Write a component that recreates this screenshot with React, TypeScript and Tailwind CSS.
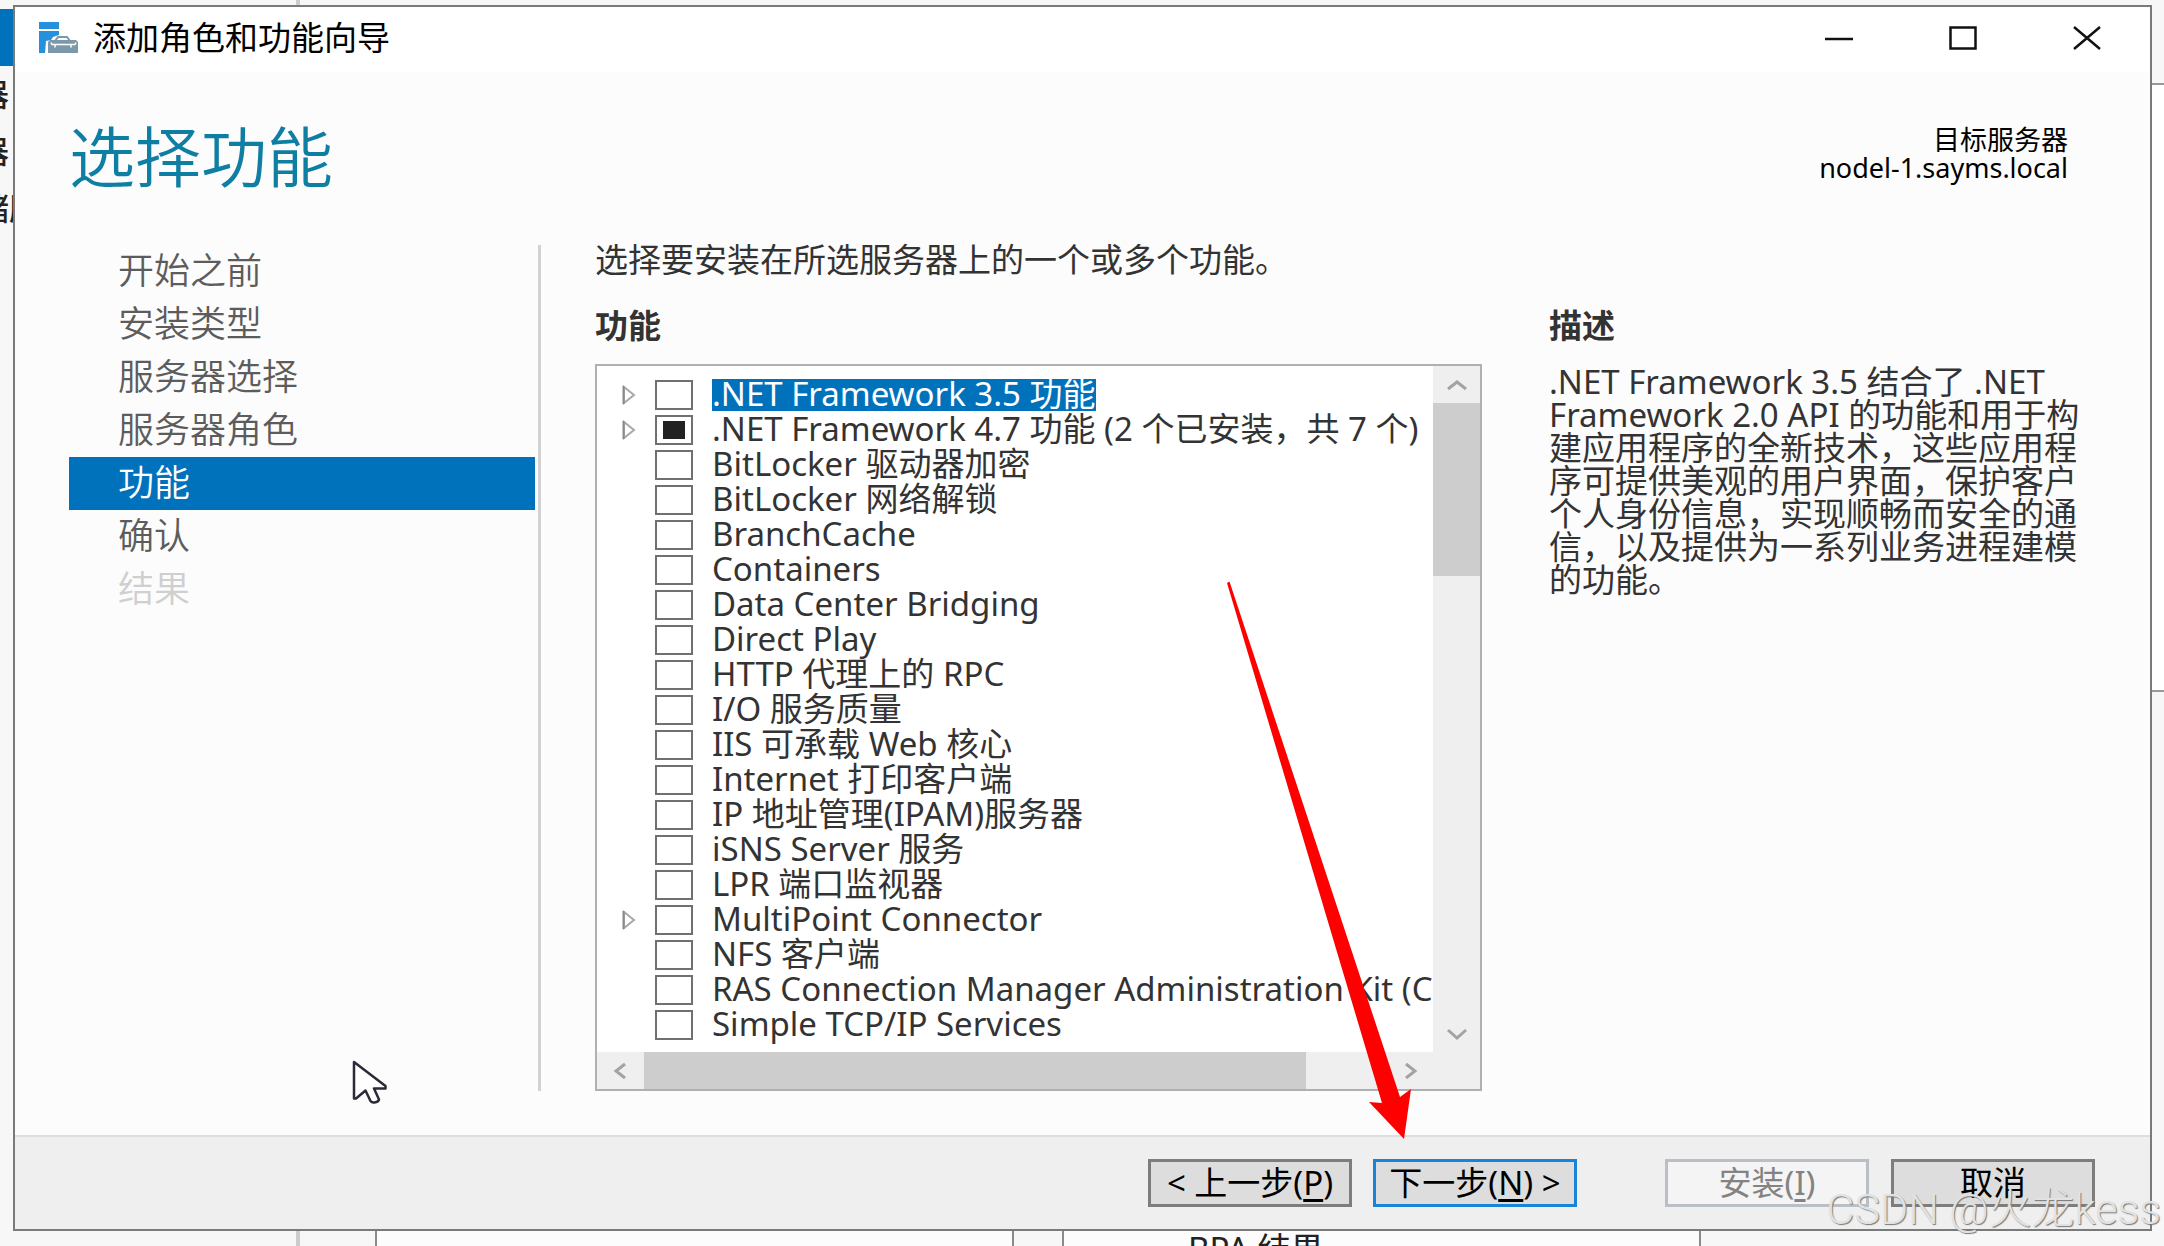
import type { ReactNode } from 'react';

type Feature = { label: string; expandable?: boolean; selected?: boolean; partial?: boolean };

const features: Feature[] = [
  { label: '.NET Framework 3.5 功能', expandable: true, selected: true },
  { label: '.NET Framework 4.7 功能 (2 个已安装，共 7 个)', expandable: true, partial: true },
  { label: 'BitLocker 驱动器加密' },
  { label: 'BitLocker 网络解锁' },
  { label: 'BranchCache' },
  { label: 'Containers' },
  { label: 'Data Center Bridging' },
  { label: 'Direct Play' },
  { label: 'HTTP 代理上的 RPC' },
  { label: 'I/O 服务质量' },
  { label: 'IIS 可承载 Web 核心' },
  { label: 'Internet 打印客户端' },
  { label: 'IP 地址管理(IPAM)服务器' },
  { label: 'iSNS Server 服务' },
  { label: 'LPR 端口监视器' },
  { label: 'MultiPoint Connector', expandable: true },
  { label: 'NFS 客户端' },
  { label: 'RAS Connection Manager Administration Kit (CMAK)' },
  { label: 'Simple TCP/IP Services' },
];

const steps = ['开始之前', '安装类型', '服务器选择', '服务器角色', '功能', '确认', '结果'];

function stepClass(step: string) {
  if (step === '功能') return 'bg-[#0072bc] text-white';
  if (step === '结果') return 'text-[#cfcfcf]';
  return 'text-[#5c5c5c]';
}

function WizardIcon() {
  return (
    <svg width="40" height="32" viewBox="0 0 40 32" aria-hidden="true">
      <path fill="#2590dc" d="M0 0h20v7H0zM0 9h20v4l-6 2-2 3-5 1-1 12H0z" />
      <path fill="none" stroke="#7c98ab" strokeWidth="2" d="M16 19l3-4h9l3 4" />
      <path fill="#7c98ab" d="M9 20l2-2h26l2 2v11H9z" />
      <path fill="none" stroke="#fff" strokeWidth="1.500" d="M12 20.500l1 2h23l1-2M16 22v3.500M32 22v3.500" />
    </svg>
  );
}

function Chevron({ d, label }: { d: string; label: string }) {
  return (
    <button aria-label={label} className="flex h-[37px] w-[47px] shrink-0 items-center justify-center">
      <svg width="22" height="18" viewBox="0 0 22 18" fill="none" stroke="#a3a3a3" strokeWidth="3">
        <path d={d} />
      </svg>
    </button>
  );
}

function FeatureRow({ feature, id }: { feature: Feature; id: string }) {
  return (
    <li className="flex h-[35px] items-center whitespace-nowrap pl-[25px]">
      <span className="w-[33px] shrink-0">
        {feature.expandable && (
          <svg width="14" height="20" viewBox="0 0 14 20" fill="none" aria-hidden="true">
            <path d="M2 2l10 8-10 8z" stroke="#a8a8a8" strokeWidth="2" />
            <path d="M1.500 1v18" stroke="#8a8a8a" strokeWidth="2" />
          </svg>
        )}
      </span>
      <input
        id={id}
        type="checkbox"
        defaultChecked={feature.partial}
        className="h-[30px] w-[38px] shrink-0 appearance-none border-2 border-[#707070] bg-clip-content px-[6px] py-[4px] checked:bg-[#222]"
      />
      <label
        htmlFor={id}
        className={
          feature.selected
            ? 'ml-[19px] h-[32px] bg-[#0072bc] leading-[30px] text-white'
            : 'ml-[19px] h-[32px] leading-[30px]'
        }
      >
        {feature.label}
      </label>
    </li>
  );
}

function FooterButton({ children, look }: { children: ReactNode; look: 'plain' | 'primary' | 'disabled' }) {
  const looks = {
    plain: 'border-[#7d7d7d] bg-[#dddddd] text-black',
    primary: 'border-[#1883d7] bg-[#dddddd] text-black',
    disabled: 'border-[#b9bfc4] bg-[#f4f4f4] text-[#838383]',
  };
  return (
    <button
      disabled={look === 'disabled'}
      className={`h-[48px] w-[204px] whitespace-nowrap border-[3px] text-[33px] leading-[40px] ${looks[look]}`}
    >
      {children}
    </button>
  );
}

function ServerManager() {
  return (
    <div className="flex h-full bg-[#f7f7f7] text-[#222]">
      <nav className="w-[300px] shrink-0 border-r-4 border-[#cccccc] pt-[9px]">
        <ul className="-ml-[146px] whitespace-nowrap text-[31px] font-medium">
          <li className="h-[57px] bg-[#0072bc] leading-[57px] text-white">仪表板</li>
          <li className="h-[57px] leading-[57px]">本地服务器</li>
          <li className="h-[57px] leading-[57px]">所有服务器</li>
          <li className="h-[57px] leading-[57px]">文件和存储服务</li>
        </ul>
      </nav>
      <div className="flex flex-1 flex-col pl-[75px]">
        <div className="mt-[83px] h-[609px] border-y-2 border-[#999] bg-white" />
        <div className="mt-[60px] flex flex-1 gap-[48px]">
          <div className="w-[639px] border-x-2 border-[#8a8a8a] bg-[#fcfcfc]" />
          <div className="flex w-[639px] items-end border-x-2 border-[#8a8a8a] bg-[#fcfcfc] pl-[124px]">
            <span className="-mb-[23px] text-[33px] leading-[40px]">BPA 结果</span>
          </div>
        </div>
      </div>
    </div>
  );
}

export default function App() {
  return (
    <div className="relative h-screen w-full overflow-hidden font-['Noto_Sans','Noto_Sans_CJK_SC',sans-serif]">
      <ServerManager />

      <section
        role="dialog"
        aria-label="添加角色和功能向导"
        className="absolute bottom-[15px] left-[13px] right-[12px] top-[5px] flex flex-col border-2 border-[#7a7a7a] bg-[#fcfcfc] text-[#333]"
      >
        <header className="flex h-[65px] shrink-0 items-center bg-white pb-[3px] pl-[24px] pr-[43px] text-black">
          <WizardIcon />
          <span className="ml-[14px] text-[33px] leading-[40px]">添加角色和功能向导</span>
          <div className="ml-auto flex gap-[84px]">
            <button aria-label="最小化" className="w-[40px]">
              <svg className="mx-auto" width="28" height="24" viewBox="0 0 28 24">
                <path d="M0 13h28" stroke="#111" strokeWidth="2.500" />
              </svg>
            </button>
            <button aria-label="最大化" className="w-[40px]">
              <svg className="mx-auto" width="28" height="24" viewBox="0 0 28 24" fill="none">
                <path d="M1.500 1.500h25v21h-25z" stroke="#111" strokeWidth="2.500" />
              </svg>
            </button>
            <button aria-label="关闭" className="w-[40px]">
              <svg className="mx-auto" width="28" height="24" viewBox="0 0 28 24" fill="none">
                <path d="M1 1l26 22M27 1L1 23" stroke="#111" strokeWidth="2.500" />
              </svg>
            </button>
          </div>
        </header>

        <div className="flex h-[173px] shrink-0 items-center justify-between pb-[6px] pl-[54px] pr-[82px]">
          <h1 className="text-[66px] font-[350] leading-[72px] text-[#0f7ea3]">选择功能</h1>
          <p className="pb-[4px] text-right text-[27px] leading-[28px] text-black">
            目标服务器
            <br />
            nodel-1.sayms.local
          </p>
        </div>

        <div className="flex min-h-0 flex-1 pb-[44px] pl-[54px] pr-[55px]">
          <nav className="w-[472px] shrink-0 border-r-[3px] border-[#d2d2d2] pr-[3px]">
            <ul className="flex flex-col text-[36px] font-[350]">
              {steps.map((step) => (
                <li key={step} className={`h-[53px] pl-[49px] leading-[52px] ${stepClass(step)}`}>
                  {step}
                </li>
              ))}
            </ul>
          </nav>

          <main className="ml-[54px] flex min-w-0 flex-1 flex-col text-[33px] leading-[33px]">
            <p className="leading-[30px]">选择要安装在所选服务器上的一个或多个功能。</p>
            <div className="mt-[34px] flex min-h-0 flex-1 gap-[67px]">
              <div className="flex min-w-0 flex-1 flex-col">
                <h2 className="font-bold">功能</h2>
                <div className="mt-[22px] flex min-h-0 flex-1 flex-col border-2 border-[#b0b0b0] bg-white">
                  <div className="flex min-h-0 flex-1">
                    <ul className="min-w-0 flex-1 overflow-hidden pt-[11px]">
                      {features.map((feature, i) => (
                        <FeatureRow key={feature.label} feature={feature} id={`feature-${i}`} />
                      ))}
                    </ul>
                    <div className="flex w-[47px] shrink-0 flex-col bg-[#efefef]">
                      <Chevron label="向上滚动" d="M2 13l9-7 9 7" />
                      <div className="h-[173px] bg-[#cdcdcd]" />
                      <div className="flex-1" />
                      <Chevron label="向下滚动" d="M2 5l9 8 9-8" />
                    </div>
                  </div>
                  <div className="flex h-[37px] shrink-0 bg-[#efefef] pr-[47px]">
                    <Chevron label="向左滚动" d="M15 2L6 9l9 7" />
                    <div className="w-[662px] bg-[#cdcdcd]" />
                    <div className="flex-1" />
                    <Chevron label="向右滚动" d="M7 2l9 7-9 7" />
                  </div>
                </div>
              </div>
              <aside className="w-[546px] shrink-0">
                <h2 className="font-bold">描述</h2>
                <p className="mt-[23px]">
                  .NET Framework 3.5 结合了 .NET Framework 2.0 API
                  的功能和用于构建应用程序的全新技术，这些应用程序可提供美观的用户界面，保护客户个人身份信息，实现顺畅而安全的通信，以及提供为一系列业务进程建模的功能。
                </p>
              </aside>
            </div>
          </main>
        </div>

        <footer className="flex h-[94px] shrink-0 items-center justify-end border-t-2 border-[#dedede] bg-[#efefef] pr-[55px]">
          <FooterButton look="plain">
            &lt; 上一步(<span className="underline underline-offset-4">P</span>)
          </FooterButton>
          <div className="ml-[21px] mr-[88px] flex">
            <FooterButton look="primary">
              下一步(<span className="underline underline-offset-4">N</span>) &gt;
            </FooterButton>
          </div>
          <FooterButton look="disabled">
            安装(<span className="underline underline-offset-4">I</span>)
          </FooterButton>
          <div className="ml-[22px] flex">
            <FooterButton look="plain">取消</FooterButton>
          </div>
        </footer>
      </section>

      <svg className="absolute left-[352px] top-[1060px]" width="36" height="44" viewBox="0 0 36 44" aria-hidden="true">
        <path
          d="M2 2v36.500h2l9.500-8 5 10.500q1.500 2 4 1.500 4-.500 4.500-3L22 28.500h11.500V26z"
          fill="#fff"
          stroke="#2b2a38"
          strokeWidth="2.500"
          strokeLinejoin="round"
        />
      </svg>

      <svg
        className="pointer-events-none absolute left-[1220px] top-[580px]"
        width="200"
        height="562"
        viewBox="1220 580 200 562"
        aria-hidden="true"
      >
        <path fill="#fe0000" d="M1227 583l2.500-1.500L1400 1097l11-8-7 50-35-37 13 1z" />
      </svg>

      <p className="pointer-events-none absolute bottom-[11px] right-[3px] font-['Roboto','Noto_Sans_CJK_SC',sans-serif] text-[43px] font-light leading-[52px] text-[#e2e2e2] [text-shadow:1px_1px_1px_#777]">
        CSDN @火龙kess
      </p>
    </div>
  );
}
